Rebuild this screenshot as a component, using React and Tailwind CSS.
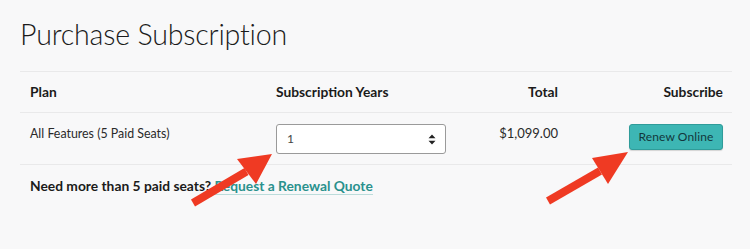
import React from 'react';

const font = { fontFamily: '"Lato", "Open Sans", "Liberation Sans", sans-serif' };

function Arrow({ tail, tip, left, bottom }) {
  // shaft runs from tail to the middle of the head's base
  const mid = [(left[0] + bottom[0]) / 2, (left[1] + bottom[1]) / 2];
  return (
    <>
      <line x1={tail[0]} y1={tail[1]} x2={mid[0]} y2={mid[1]} stroke="#ef3a23" strokeWidth="8" />
      <polygon points={`${tip.join(',')} ${left.join(',')} ${bottom.join(',')}`} fill="#ef3a23" />
    </>
  );
}

export default function App() {
  return (
    <div className="relative w-[750px] h-[249px] bg-[#f8f8f9] text-[#1b1b1b] overflow-hidden" style={font}>
      <div className="px-5 pt-[14px]">
        <h1 className="text-[28.6px] font-light leading-[40px] tracking-[-0.2px]">Purchase Subscription</h1>

        <div className="mt-[17px] w-[712px]">
          <div className="grid grid-cols-[246px_190px_112px_1fr] border-t border-b border-[#e9e9ea] h-[42px] items-center text-[13.8px] font-bold">
            <div className="px-[10px]">Plan</div>
            <div className="px-[10px]">Subscription Years</div>
            <div className="px-[10px] text-right">Total</div>
            <div className="px-[9px] text-right">Subscribe</div>
          </div>
          <div className="grid grid-cols-[246px_190px_112px_1fr] border-b border-[#e9e9ea] h-[52px]">
            <div className="px-[10px] pt-[12px] text-[12.4px] text-[#2a2a2a]">All Features (5 Paid Seats)</div>
            <div className="px-[10px] pt-[11px]">
              <div className="flex items-center justify-between w-[170px] h-[30px] bg-white border border-[#9a9a9a] rounded-[3px] pl-[10px] pr-[9px] text-[12px] text-[#444]">
                <span>1</span>
                <svg width="8" height="11" viewBox="0 0 8 11">
                  <path d="M4 0.5 L7.5 4.2 H0.5 Z M4 10.5 L7.5 6.8 H0.5 Z" fill="#222" />
                </svg>
              </div>
            </div>
            <div className="px-[10px] pt-[11px] text-right text-[13px] text-[#2a2a2a]">$1,099.00</div>
            <div className="px-[9px] pt-[11px] flex justify-end items-start">
              <button className="w-[94px] h-[26px] bg-[#3db6b4] border border-[#2f9c9a] rounded-[3px] text-[12px] tracking-[0.1px] text-[#12363c] shadow-[0_1px_1px_rgba(0,0,0,0.15)]">
                Renew Online
              </button>
            </div>
          </div>
          <div className="px-[10px] pt-[11px] text-[13.8px] font-bold">
            Need more than 5 paid seats?{' '}
            <a className="text-[#2a918d] border-b border-[#bcdcdb]">Request a Renewal Quote</a>
          </div>
        </div>
      </div>

      <svg className="absolute inset-0 pointer-events-none" width="750" height="249" viewBox="0 0 750 249">
        <Arrow tail={[193, 203]} tip={[272, 154]} left={[237, 159]} bottom={[256, 184]} />
        <Arrow tail={[548, 201]} tip={[628, 152]} left={[592, 158]} bottom={[608, 184]} />
      </svg>
    </div>
  );
}
